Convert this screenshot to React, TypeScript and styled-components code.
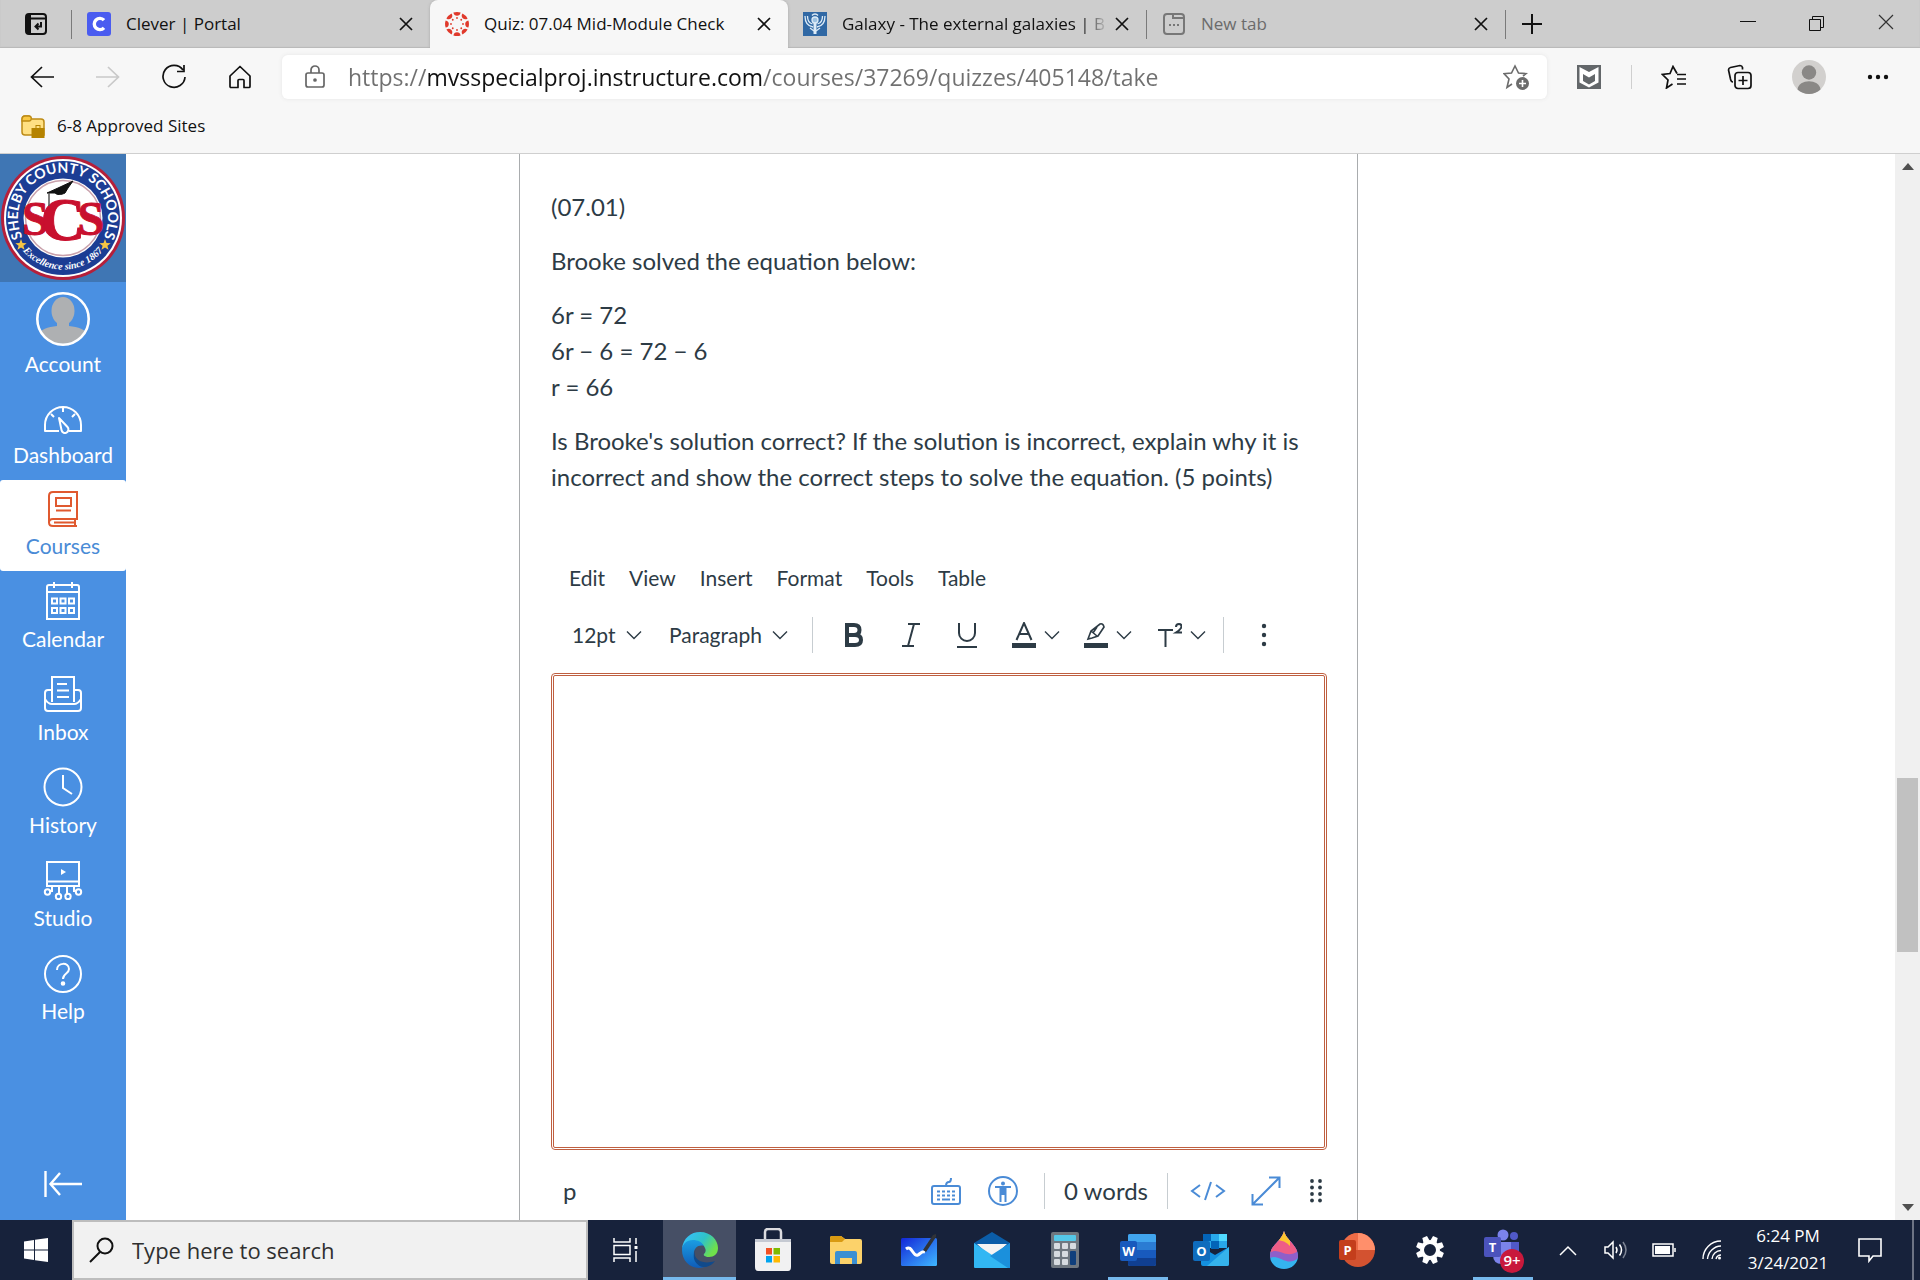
import React from "react";
import styled, { createGlobalStyle, css } from "styled-components";

const UI = `"Open Sans", "Noto Sans", sans-serif`;
const LATO = `Lato, "Open Sans", sans-serif`;
const INK = "#2d3b45";
const LINK = "#4a8bd6";

const Global = createGlobalStyle`
  *, *::before, *::after { box-sizing: border-box; }
  body { margin: 0; background: #fff; font-family: ${UI}; color: #111; }
  button, input, select, textarea { font: inherit; color: inherit; margin: 0; padding: 0; border: 0; background: none; }
  button { cursor: pointer; }
  a { color: inherit; text-decoration: none; }
  svg { display: block; flex: none; }
`;

const Screen = styled.div`
  height: 100vh;
  display: flex;
  flex-direction: column;
  overflow: hidden;
`;

/* ---------- tab strip ---------- */
const TabStrip = styled.header`
  display: flex;
  height: 48px;
  background: #cdcdcd;
  box-shadow: inset 0 -1px 1px #b9b9b9;
`;
const StripButton = styled.button<{ $w: number }>`
  width: ${(p) => p.$w}px;
  display: grid;
  place-items: center;
`;
const Tab = styled.div<{ $active?: boolean; $muted?: boolean }>`
  flex: 0 1 358px;
  min-width: 0;
  display: flex;
  align-items: center;
  padding: 0 14px 0 15px;
  color: ${(p) => (p.$muted ? "#6b6b6b" : "#111")};
  ${(p) => p.$active && css`
    background: #f7f7f7;
    border-radius: 8px 8px 0 0;
    box-shadow: 0 0 3px #a8a8a8;
    clip-path: inset(0 -4px 0 -4px);
  `}
`;
const Divider = styled.span<{ $h: number; $c: string; $ml?: number }>`
  flex: none;
  align-self: center;
  width: 1px;
  height: ${(p) => p.$h}px;
  margin-left: ${(p) => p.$ml ?? 0}px;
  background: ${(p) => p.$c};
`;
const TabTitle = styled.span<{ $fade?: boolean }>`
  flex: 1;
  min-width: 0;
  margin: 0 4px 0 15px;
  font-size: 17px;
  line-height: 24px;
  white-space: nowrap;
  overflow: hidden;
  ${(p) => p.$fade && css`mask-image: linear-gradient(to right, #000 90%, transparent);`}
`;
const TabClose = styled.button`
  flex: none;
  width: 20px;
  height: 20px;
  display: grid;
  place-items: center;
  color: #111;
`;
const WindowButtons = styled.div`
  margin-left: auto;
  display: flex;
`;

/* ---------- address row ---------- */
const Toolbar = styled.nav`
  display: flex;
  align-items: center;
  height: 58px;
  padding: 0 18px 0 9px;
  background: #f7f7f7;
`;
const ToolButton = styled.button<{ $w?: number }>`
  width: ${(p) => p.$w ?? 66}px;
  height: 44px;
  display: grid;
  place-items: center;
`;
const Address = styled.label`
  flex: 1;
  height: 44px;
  margin-left: 9px;
  padding: 0 16px 0 20px;
  display: flex;
  align-items: center;
  gap: 20px;
  background: #fff;
  border-radius: 6px;
  box-shadow: 0 0 4px #e6e6e6;
`;
const UrlInput = styled.input`
  flex: 1;
  min-width: 0;
  height: 36px;
  font-size: 23px;
  outline: 0;
  color: #707070;
  background: linear-gradient(to right, #707070 80px, #111 80px 415px, #707070 415px);
  background-clip: text;
  -webkit-text-fill-color: transparent;
`;
const Bookmarks = styled.div`
  height: 48px;
  padding: 0 0 7px 20px;
  display: flex;
  align-items: center;
  background: #f7f7f7;
  border-bottom: 1px solid #cfcfcf;
`;
const Bookmark = styled.a`
  display: flex;
  align-items: center;
  gap: 12px;
  font-size: 17px;
  line-height: 24px;
`;

/* ---------- page ---------- */
const Page = styled.div`
  flex: 1;
  min-height: 0;
  display: flex;
`;
const Sidebar = styled.nav`
  width: 126px;
  flex: none;
  display: flex;
  flex-direction: column;
  background: #4a90e2;
  color: #fff;
  font-family: ${LATO};
`;
const Brand = styled.a`
  height: 128px;
  display: grid;
  place-items: center;
  background: #3f76b4;
`;
const NavItem = styled.a<{ $active?: boolean; $gap: number }>`
  display: flex;
  flex-direction: column;
  align-items: center;
  gap: ${(p) => p.$gap}px;
  padding: 10px 0 12px;
  font-size: 21px;
  line-height: 26px;
  ${(p) => p.$active && css`
    background: #fff;
    color: ${LINK};
    border-radius: 3px;
  `}
`;
const Collapse = styled.button`
  margin-top: auto;
  height: 72px;
  display: grid;
  place-items: center;
`;
const Main = styled.main`
  flex: 1;
  min-width: 0;
  display: grid;
  grid-template-columns: 393px minmax(0, 1fr) 537px;
  font-family: ${LATO};
  color: ${INK};
`;
const Question = styled.section`
  grid-column: 2;
  padding: 35px 30px 0 31px;
  border: solid #a9acae;
  border-width: 0 1px;
  display: flex;
  flex-direction: column;
  min-height: 0;
`;
const Para = styled.p`
  margin: 0 0 18px;
  font-size: 24px;
  line-height: 36px;
`;
const MenuBar = styled.div`
  margin-top: 48px;
  padding-left: 18px;
  display: flex;
  gap: 24px;
  font-size: 21px;
  line-height: 34px;
`;
const FormatBar = styled.div`
  height: 78px;
  padding: 2px 0 0 21px;
  display: flex;
  align-items: center;
`;
const Picker = styled.label<{ $w: number }>`
  width: ${(p) => p.$w}px;
  display: flex;
  align-items: center;
  gap: 10px;
`;
const Select = styled.select`
  appearance: none;
  outline: 0;
  font-size: 21px;
  line-height: 28px;
`;
const FormatButton = styled.button<{ $w: number; $end?: boolean }>`
  width: ${(p) => p.$w}px;
  height: 36px;
  display: flex;
  align-items: center;
  justify-content: ${(p) => (p.$end ? "flex-end" : "center")};
  gap: 8px;
`;
const Editor = styled.textarea`
  flex: 1;
  min-height: 0;
  width: 100%;
  padding: 12px;
  resize: none;
  outline: 0;
  font-size: 18px;
  border: 3px double #bf5f40;
  border-radius: 4px;
`;
const StatusBar = styled.div`
  height: 70px;
  padding: 12px 4px 0 12px;
  display: flex;
  align-items: center;
  color: ${LINK};
`;
const StatusText = styled.span<{ $grow?: boolean }>`
  flex: ${(p) => (p.$grow ? 1 : "none")};
  padding: ${(p) => (p.$grow ? "0" : "0 19px")};
  font-size: 24px;
  line-height: 32px;
  color: ${INK};
`;

const ScrollTrack = styled.div`
  width: 25px;
  flex: none;
  display: flex;
  flex-direction: column;
  align-items: center;
  background: #f0f0f0;
`;
const ScrollArrow = styled.button`
  width: 25px;
  height: 25px;
  display: grid;
  place-items: center;
`;
const ScrollGap = styled.div<{ $f: number }>`
  flex: ${(p) => p.$f} 1 0;
`;
const ScrollThumb = styled.div`
  width: 21px;
  flex: 174 1 0;
  background: #c1c1c1;
`;

/* ---------- taskbar ---------- */
const Taskbar = styled.footer`
  height: 60px;
  flex: none;
  display: flex;
  background: #17223b;
  color: #fff;
`;
const TaskButton = styled.button<{ $w?: number; $open?: boolean; $focus?: boolean }>`
  width: ${(p) => p.$w ?? 73}px;
  height: 60px;
  display: grid;
  place-items: center;
  background: ${(p) => (p.$focus ? "#464f65" : "none")};
  ${(p) => (p.$open || p.$focus) && css`
    background-image: linear-gradient(#76b9ed, #76b9ed);
    background-repeat: no-repeat;
    background-position: bottom center;
    background-size: ${p.$focus ? "100%" : "60px"} 3px;
  `}
`;
const Search = styled.label`
  width: 516px;
  display: flex;
  align-items: center;
  gap: 17px;
  padding-left: 15px;
  background: #f1f1f1;
  border: 2px solid #bdbdbd;
`;
const SearchInput = styled.input`
  flex: 1;
  min-width: 0;
  font-size: 22px;
  outline: 0;
  &::placeholder { color: #2f2f2f; opacity: 1; }
`;
const Tray = styled.div`
  margin-left: auto;
  display: flex;
`;
const Clock = styled.time`
  width: 104px;
  padding-top: 2px;
  text-align: center;
  font-size: 17px;
  line-height: 27px;
`;
const ShowDesktop = styled.button`
  width: 8px;
  margin-left: 12px;
  border-left: 2px solid #6d7485;
`;

/* ---------- drawings ---------- */
type SvgProps = { w: number; h: number; vb?: string; sw?: number; c?: string; fill?: string; children: React.ReactNode };
const Svg = ({ w, h, vb, sw = 2, c = "currentColor", fill = "none", children }: SvgProps) => (
  <svg width={w} height={h} viewBox={vb ?? `0 0 ${w} ${h}`} fill={fill} stroke={c} strokeWidth={sw} aria-hidden="true">
    {children}
  </svg>
);

const CloseX = () => <Svg w={14} h={14} sw={1.700}><path d="M1 1l12 12M13 1L1 13" /></Svg>;
const Chevron = () => <Svg w={16} h={10} sw={1.4}><path d="M1 1.5l7 7 7-7" /></Svg>;

const CleverLogo = () => (
  <svg width="24" height="24" viewBox="0 0 24 24"><rect width="24" height="24" rx="3" fill="#4a5cf0" />
    <path d="M17 8.2A5.6 5.6 0 1 0 17 15.8" fill="none" stroke="#fff" strokeWidth="3.4" /></svg>
);
const CanvasLogo = () => (
  <svg width="24" height="24" viewBox="0 0 24 24">
    {[0, 45, 90, 135, 180, 225, 270, 315].map((a) => (
      <g key={a} transform={`rotate(${a} 12 12)`} fill="#e0392b">
        <path d="M8.400 .6A12 12 0 0 1 15.600 .6Q15 3.800 12 3.800T8.400 .6Z" />
        <circle cx="12" cy="6" r=".9" />
      </g>
    ))}
  </svg>
);
const BritannicaLogo = () => (
  <svg width="24" height="24" viewBox="0 0 24 24"><rect width="24" height="24" fill="#3068a4" />
    <g fill="none" stroke="#dcebf7" strokeWidth="1.3">
      <path d="M2 4c0 6 2 10 8 11M4.500 4c0 4 1.500 7 5 8M22 4c0 6-2 10-8 11M19.500 4c0 4-1.500 7-5 8M9 3.500c1.500-2 4.500-2 6 0" />
      <circle cx="12" cy="8" r="3" fill="#9dc1e0" /><path d="M12 11v11" strokeWidth="3" /><path d="M7 16l4 3M17 16l-4 3" />
    </g></svg>
);
const FolderIcon = () => (
  <svg width="25" height="24" viewBox="0 0 25 24">
    <path d="M2 5a3 3 0 0 1 3-3h4l3 3h9a3 3 0 0 1 3 3v13H5a3 3 0 0 1-3-3z" fill="#ffe083" stroke="#bd8b16" strokeWidth="1.5" />
    <path d="M2 6c0-3 1-4 3-4h4c3 0 3 5 0 5H2z" fill="#fac944" stroke="#bd8b16" strokeWidth="1.3" />
    <path d="M11.500 14h4v-3h5v3h4v10h-13z" fill="#b58300" /><path d="M16.500 14v-2h3v2z" fill="#ffe083" />
  </svg>
);
const McAfee = () => (
  <svg width="24" height="24" viewBox="0 0 24 24"><rect width="24" height="24" fill="#63676a" />
    <path d="M2.500 2L12 7l9.500-5v15.500L12 22.500 2.500 17.500z" fill="#fff" /><path d="M6 9l6 3.500L18 9v7l-6 3.500L6 16z" fill="#63676a" /></svg>
);
const Profile = () => (
  <svg width="34" height="34" viewBox="0 0 34 34"><circle cx="17" cy="17" r="17" fill="#d2d0ce" />
    <circle cx="17" cy="12.500" r="7.200" fill="#8a8886" /><path d="M5.500 29.500c1-11 22-11 23 0a17 17 0 0 1-23 0z" fill="#8a8886" /></svg>
);

const star5 = (cx: number, cy: number, r: number) =>
  Array.from({ length: 10 }, (_, i) => {
    const a = (Math.PI / 5) * i - Math.PI / 2;
    const q = i % 2 ? r * 0.42 : r;
    return `${cx + q * Math.cos(a)},${cy + q * Math.sin(a)}`;
  }).join(" ");

const SchoolSeal = () => (
  <svg width="126" height="126" viewBox="0 0 126 126" role="img" aria-label="Shelby County Schools">
    <defs>
      <path id="sealTop" d="M26.500 89A45 45 0 1 1 99.500 89" />
      <path id="sealBottom" d="M14 80A52 52 0 0 0 112 80" />
    </defs>
    <circle cx="63" cy="63" r="62" fill="#b51f3a" />
    <circle cx="63" cy="63" r="59" fill="#fff" />
    <circle cx="63" cy="63" r="57" fill="#1c3d94" />
    <circle cx="63" cy="63" r="39.500" fill="#fff" />
    <circle cx="63" cy="63" r="37.500" fill="#fff" stroke="#c9a1ac" strokeWidth="1.5" />
    <g fill="#fff" fontFamily="Lato, sans-serif">
      <text fontSize="14" fontWeight="700"><textPath href="#sealTop" startOffset="50%" textAnchor="middle">SHELBY COUNTY SCHOOLS</textPath></text>
      <text fontSize="10" fontStyle="italic" fontWeight="700" fontFamily="Liberation Serif, serif"><textPath href="#sealBottom" startOffset="50%" textAnchor="middle">Excellence since 1867</textPath></text>
    </g>
    <text x="63" y="80" fontSize="48" textAnchor="middle" fill="#c8102e" stroke="#c8102e" strokeWidth="1" fontFamily="Liberation Serif, serif" fontWeight="700">
      S<tspan fontSize="62" dx="-8" dy="5">C</tspan><tspan dx="-8" dy="-5">S</tspan>
    </text>
    <path d="M47 38l11-5 15-7-5 7-3 5c-4 2-8 2-10 0z" fill="#111" stroke="#111" strokeWidth="1" />
    <path d="M49 38v13" stroke="#555" strokeWidth="1.500" />
    <polygon points={star5(21, 90, 6)} fill="#f6c544" /><polygon points={star5(105, 90, 6)} fill="#f6c544" />
  </svg>
);
const UserAvatar = () => (
  <svg width="54" height="54" viewBox="0 0 54 54">
    <clipPath id="avatarClip"><circle cx="27" cy="27" r="25" /></clipPath>
    <g clipPath="url(#avatarClip)" fill="#aeb0b2"><ellipse cx="27" cy="19" rx="11.500" ry="14" /><path d="M21 28h12v6c9 1 17 3 19 10v10H2V44c2-7 10-9 19-10z" /></g>
    <circle cx="27" cy="27" r="25.700" fill="none" stroke="#fff" strokeWidth="2.600" />
  </svg>
);
const Dashboard = () => <Svg w={40} h={40}><path d="M16 32H2v-6a18 18 0 0 1 36 0v6H26M20 9v4M8 15l3 3M32 15l-3 3M16 19l8.500 9a3.500 3.500 0 1 1-6 3z" strokeLinejoin="round" /></Svg>;
const Courses = () => <Svg w={40} h={40} c="#e0592f"><path d="M6 33V6q0-4 4-4h24v27H10q-4 0-4 3.500T10 36h24M32 29v7M11 32.500h21M13 8h15v8H13zM13 20.500h15" /></Svg>;
const Calendar = () => <Svg w={40} h={40}><path d="M4 38V6q0-2 2-2h28q2 0 2 2v32zM4 11h32M11 1v6M29 1v6M9 17.500h5v5H9zM17.500 17.500h5v5h-5zM26 17.500h5v5h-5zM9 27h5v5H9zM17.500 27h5v5h-5zM26 27h5v5h-5z" /></Svg>;
const Inbox = () => <Svg w={40} h={40}><path d="M9 28V3h22v25M9 16H5q-3 0-3 3v15q0 3 3 3h30q3 0 3-3V19q0-3-3-3h-4M2 25q3 5 7 5h22q4 0 7-5M14 10h10M14 16.500h12M14 23h12" /></Svg>;
const History = () => <Svg w={40} h={40}><circle cx="20" cy="20" r="18.500" /><path d="M20 8v13l9 6" /></Svg>;
const Studio = () => (
  <Svg w={40} h={40}><path d="M4 2h32v24H4zM4 21.500h32M9 26v5H7M16 26v8M24 26v8M31 26v5h2" /><path d="M18 9l5 3-5 3z" fill="currentColor" stroke="none" />
    <circle cx="4.500" cy="32" r="2.700" /><circle cx="15.500" cy="36.500" r="2.700" /><circle cx="25" cy="36.500" r="2.700" /><circle cx="35.500" cy="32" r="2.700" /></Svg>
);
const Help = () => <Svg w={40} h={40}><circle cx="20" cy="21" r="18" /><path d="M14 17c0-8 12-8 12-1 0 5-6 4-6 10" /><circle cx="20" cy="30.500" r="1.300" fill="currentColor" /></Svg>;

const nav = [
  { label: "Dashboard", icon: <Dashboard />, gap: 3 },
  { label: "Courses", icon: <Courses />, gap: 3, active: true },
  { label: "Calendar", icon: <Calendar />, gap: 5 },
  { label: "Inbox", icon: <Inbox />, gap: 5 },
  { label: "History", icon: <History />, gap: 5 },
  { label: "Studio", icon: <Studio />, gap: 5 },
  { label: "Help", icon: <Help />, gap: 5 },
];

const OfficeTile = ({ x = 0, y = 10, c, letter }: { x?: number; y?: number; c: string; letter: string }) => (
  <><rect x={x} y={y} width="17" height="20" rx="2" fill={c} />
    <text x={x + 8.500} y={y + 15} fill="#fff" fontFamily="Open Sans, sans-serif" fontWeight="700" fontSize="13" textAnchor="middle">{letter}</text></>
);
const Edge = () => (
  <svg width="38" height="38" viewBox="0 0 38 38">
    <defs>
      <linearGradient id="eg" x1="0" y1="0" x2="1" y2=".5"><stop offset=".2" stopColor="#35c1f1" /><stop offset=".6" stopColor="#2fc3c8" /><stop offset="1" stopColor="#6fe04b" /></linearGradient>
      <linearGradient id="eb" x1="0" y1="0" x2="0" y2="1"><stop offset="0" stopColor="#1b9de2" /><stop offset="1" stopColor="#0f5cb8" /></linearGradient>
    </defs>
    <path d="M1 18C2 7 10 1 19 1c11 0 18 8 18 16 0 6-4 9-9 9-4 0-6-2-5-3 2-2 2-4 1-6-2-5-7-7-12-7C7 10 3 13 1 18z" fill="url(#eg)" />
    <path d="M1 19c0-6 5-10 11-10 5 0 9 2 11 6-6-2-11 3-10 9 1 7 7 12 13 11-13 6-25-3-25-16z" fill="url(#eb)" />
    <path d="M15 18c-5 8 4 17 19 12-2 3-5 5-9 6-9 1-16-9-10-18z" fill="#114a8b" />
  </svg>
);
const Store = () => (
  <svg width="36" height="44" viewBox="0 0 36 44"><path d="M10 12V4q0-3 3-3h10q3 0 3 3v8" fill="none" stroke="#dcdce0" strokeWidth="2.500" />
    <path d="M0 11h36v28q0 4-3 4H3q-3 0-3-4z" fill="#f1f1f2" /><path d="M0 11h36v3H0z" fill="#c5c9d2" />
    <path d="M11 20h6v6.500h-6z" fill="#f25022" /><path d="M18.500 20H25v6.500h-6.500z" fill="#7fba00" /><path d="M11 28h6v6.500h-6z" fill="#00a4ef" /><path d="M18.500 28H25v6.500h-6.500z" fill="#ffb900" /></svg>
);
const Explorer = () => (
  <svg width="32" height="28" viewBox="0 0 32 28"><path d="M0 2q0-2 2-2h9l4 3h15q2 0 2 2v21q0 2-2 2H2q-2 0-2-2z" fill="#fcd26a" /><path d="M0 2q0-2 2-2h9l4 3-3 3H0z" fill="#d99a12" />
    <path d="M5 28V17q0-2 2-2h18q2 0 2 2v11h-5v-6H10v6z" fill="#3b8fd2" /></svg>
);
const Whiteboard = () => (
  <svg width="36" height="34" viewBox="0 0 36 34"><defs><linearGradient id="wb" x1="0" y1="0" x2="1" y2="1"><stop offset="0" stopColor="#1226d8" /><stop offset="1" stopColor="#3fb8ff" /></linearGradient></defs>
    <rect y="5" width="36" height="28" rx="1.500" fill="url(#wb)" /><path d="M5 16c6-5 7 9 12 6 3-2 4-4 7-3" fill="none" stroke="#fff" strokeWidth="3" /><path d="M22 17L32 2l3-1v3L25 19z" fill="#303338" /></svg>
);
const Mail = () => (
  <svg width="36" height="36" viewBox="0 0 36 36"><path d="M0 11L18 0l18 11v6H0z" fill="#0b5da8" /><path d="M3 12h30L18 26z" fill="#f4f4f4" /><path d="M0 11l36 24q0 1-1 1H1q-1 0-1-1z" fill="#32b7f3" /><path d="M36 11L16 24l18 12h2z" fill="#1b90dc" /></svg>
);
const Calculator = () => (
  <svg width="28" height="36" viewBox="0 0 28 36"><rect width="28" height="36" rx="2" fill="#6f7780" /><rect x="3" y="3" width="22" height="6" rx="1" fill="#54c7e8" />
    <g fill="#d7dbe0">{[11, 19, 27].map((y) => [3, 11].map((x) => <rect key={`${x}-${y}`} x={x} y={y} width="6" height="6" rx="1" />))}<rect x="19" y="11" width="6" height="6" rx="1" /></g><rect x="19" y="19" width="6" height="14" rx="1" fill="#103f7c" /></svg>
);
const Word = () => (
  <svg width="36" height="34" viewBox="0 0 36 34"><rect x="8" y="1" width="28" height="32" rx="2" fill="#2b7cd3" /><path d="M8 3q0-2 2-2h24q2 0 2 2v6H8z" fill="#41a5ee" /><path d="M8 17h28v8H8z" fill="#185abd" /><path d="M8 25h28v6q0 2-2 2H10q-2 0-2-2z" fill="#103f91" /><OfficeTile y={8} c="#185abd" letter="W" /></svg>
);
const Outlook = () => (
  <svg width="36" height="34" viewBox="0 0 36 34"><path d="M10 1h24v14H10z" fill="#28a8ea" /><path d="M10 1h8v7h-8zM18 8h8v8h-8z" fill="#0364b8" /><path d="M26 1h8v7h-8z" fill="#50d9ff" /><path d="M8 14l14 8 14-8v17q0 2-2 2H10q-2 0-2-2z" fill="#1490df" /><path d="M36 14L14 33h20q2 0 2-2z" fill="#35b3ec" /><OfficeTile y={8} c="#0f6cbd" letter="O" /></svg>
);
const Paint3D = () => (
  <svg width="28" height="38" viewBox="0 0 28 38"><clipPath id="drop"><path d="M14 0c2 9 14 14 14 25a14 13 0 0 1-28 0C0 14 12 10 14 0z" /></clipPath>
    <g clipPath="url(#drop)"><path d="M0 0h28v38H0z" fill="#35b4ef" /><path d="M0 27c9-5 17 10 28 0V0H0z" fill="#8f5fc9" /><path d="M0 22c8-7 16 7 28-2V0H0z" fill="#ee5d86" /><path d="M10 0h10v15q-5-6-14-6z" fill="#fdc62f" /></g></svg>
);
const PowerPoint = () => (
  <svg width="36" height="38" viewBox="0 0 36 38"><circle cx="19" cy="19" r="17" fill="#d35230" /><path d="M19 2a17 17 0 0 1 17 17H19z" fill="#ff8f6b" /><path d="M19 2A17 17 0 0 0 2 19h17z" fill="#ed6c47" /><OfficeTile y={9} c="#c43e1c" letter="P" /></svg>
);
const Gear = () => (
  <svg width="28" height="28" viewBox="0 0 28 28"><g fill="#fff">{[0, 45, 90, 135, 180, 225, 270, 315].map((a) => <path key={a} d="M11.500 0h5l.8 5h-6.600z" transform={`rotate(${a + 22.500} 14 14)`} />)}</g><circle cx="14" cy="14" r="8" fill="none" stroke="#fff" strokeWidth="4" /></svg>
);
const Teams = () => (
  <svg width="42" height="46" viewBox="0 0 42 46"><circle cx="21" cy="8" r="5.500" fill="#7b83eb" /><circle cx="32" cy="9" r="4" fill="#5059c9" /><path d="M26 15h11v9q0 8-8 8z" fill="#5059c9" /><path d="M12 15h17v13q0 9-9 9t-9-9z" fill="#7b83eb" /><OfficeTile x={2} y={10} c="#4b53bc" letter="T" />
    <circle cx="30" cy="34" r="12" fill="#c8193c" /><text x="30" y="39" fill="#fff" fontFamily="Open Sans, sans-serif" fontWeight="600" fontSize="15" textAnchor="middle">9+</text></svg>
);

const apps: { name: string; icon: React.ReactNode; open?: boolean; focus?: boolean }[] = [
  { name: "Microsoft Edge", icon: <Edge />, focus: true },
  { name: "Microsoft Store", icon: <Store /> },
  { name: "File Explorer", icon: <Explorer /> },
  { name: "Whiteboard", icon: <Whiteboard /> },
  { name: "Mail", icon: <Mail /> },
  { name: "Calculator", icon: <Calculator /> },
  { name: "Word", icon: <Word />, open: true },
  { name: "Outlook", icon: <Outlook /> },
  { name: "Paint 3D", icon: <Paint3D /> },
  { name: "PowerPoint", icon: <PowerPoint /> },
  { name: "Settings", icon: <Gear /> },
  { name: "Teams", icon: <Teams />, open: true },
];

const STAR = "M9 20l-5 3.500 2-8.500L1 9.600 8.500 9 12 2l3.500 7 7.500 .6-3 2.500";

export default function App() {
  return (
    <>
      <Global />
      <Screen>
        <TabStrip>
          <StripButton $w={71} aria-label="Tab actions">
            <Svg w={22} h={22} c="#111"><rect x="1" y="1" width="20" height="20" rx="3" /><path d="M2 2h3v18H2z" fill="#111" /><path d="M6 5.500h14M16 9v4.500h-5M13.500 10.500l-3 3 3 3" /></Svg>
          </StripButton>
          <Divider $h={29} $c="#7a7a7a" />
          <Tab><CleverLogo /><TabTitle>Clever | Portal</TabTitle><TabClose aria-label="Close tab"><CloseX /></TabClose></Tab>
          <Tab $active><CanvasLogo /><TabTitle>Quiz: 07.04 Mid-Module Check</TabTitle><TabClose aria-label="Close tab"><CloseX /></TabClose></Tab>
          <Tab><BritannicaLogo /><TabTitle $fade>Galaxy - The external galaxies | B</TabTitle><TabClose aria-label="Close tab"><CloseX /></TabClose></Tab>
          <Divider $h={29} $c="#7a7a7a" />
          <Tab $muted>
            <Svg w={24} h={22} c="#777"><rect x="2" y="1" width="20" height="20" rx="3" /><path d="M11 1v4h11M7 12h2M11 12h2M15 12h2" /></Svg>
            <TabTitle>New tab</TabTitle><TabClose aria-label="Close tab"><CloseX /></TabClose>
          </Tab>
          <Divider $h={29} $c="#7a7a7a" />
          <StripButton $w={52} aria-label="New tab"><Svg w={20} h={20} c="#111"><path d="M10 0v20M0 10h20" /></Svg></StripButton>
          <WindowButtons>
            <StripButton $w={69} aria-label="Minimize"><Svg w={16} h={20} sw={1} c="#111"><path d="M0 7.500h16" /></Svg></StripButton>
            <StripButton $w={69} aria-label="Restore"><Svg w={16} h={20} sw={1} c="#111"><path d="M.5 5.500h11v11H.500zM3.500 5.500v-3h11v11h-3" /></Svg></StripButton>
            <StripButton $w={69} aria-label="Close window"><Svg w={16} h={20} sw={1.200} c="#333"><path d="M1 1l14 14M15 1L1 15" /></Svg></StripButton>
          </WindowButtons>
        </TabStrip>

        <Toolbar aria-label="Browser">
          <ToolButton aria-label="Back"><Svg w={24} h={22} c="#111" sw={1.700}><path d="M24 11H1.500M12 1L1.500 11 12 21" /></Svg></ToolButton>
          <ToolButton aria-label="Forward"><Svg w={24} h={22} c="#c9c9c9" sw={1.700}><path d="M0 11h22.500M12 1l10.500 10L12 21" /></Svg></ToolButton>
          <ToolButton aria-label="Refresh"><Svg w={26} h={26} c="#111" sw={1.700}><path d="M22 6A11 11 0 1 0 24 13M23 1v6.500h-7" /></Svg></ToolButton>
          <ToolButton aria-label="Home"><Svg w={22} h={24} c="#111" sw={1.700}><path d="M1 11L11 1.500 21 11v10.500q0 1-1 1h-5v-7q0-1-1-1h-4q-1 0-1 1v7H2q-1 0-1-1z" strokeLinejoin="round" /></Svg></ToolButton>
          <Address>
            <Svg w={26} h={24} c="#666" sw={1.700}><rect x="4" y="8" width="18" height="14" rx="2" /><path d="M9 8V5a4 4 0 0 1 8 0v3" /><circle cx="13" cy="15" r="1" fill="#666" /></Svg>
            <UrlInput aria-label="Address" defaultValue="https://mvsspecialproj.instructure.com/courses/37269/quizzes/405148/take" />
            <Svg w={28} h={26} c="#6b6b6b" sw={1.600}><path d={STAR} /><circle cx="19.500" cy="19.500" r="6.500" fill="#6b6b6b" stroke="none" /><path d="M19.500 16v7M16 19.500h7" stroke="#fff" /></Svg>
          </Address>
          <ToolButton $w={84} aria-label="McAfee WebAdvisor"><McAfee /></ToolButton>
          <Divider $h={24} $c="#cfcfcf" />
          <ToolButton $w={84} aria-label="Favorites"><Svg w={26} h={24} c="#111" sw={1.700}><path d="M16 8.500L12 1.500 9 8.500 1.500 9.500 7 15l-1.500 8 6-4M16 9.500h9M16 14h9M16 19h9" /></Svg></ToolButton>
          <ToolButton $w={48} aria-label="Collections"><Svg w={26} h={26} c="#111" sw={1.700}><path d="M6 18c-2 0-2-1-2.500-3L1.500 6q0-2 2-2.500L13 1.500q2 0 2.500 2v2" /><rect x="8" y="8.500" width="16" height="16" rx="3" /><path d="M16 12v9M11.500 16.500h9" /></Svg></ToolButton>
          <ToolButton $w={90} aria-label="Profile"><Profile /></ToolButton>
          <ToolButton $w={48} aria-label="Menu"><Svg w={22} h={6} c="none" fill="#111"><circle cx="3" cy="3" r="2.200" /><circle cx="11" cy="3" r="2.200" /><circle cx="19" cy="3" r="2.200" /></Svg></ToolButton>
        </Toolbar>
        <Bookmarks><Bookmark href="#"><FolderIcon />6-8 Approved Sites</Bookmark></Bookmarks>

        <Page>
          <Sidebar aria-label="Global navigation">
            <Brand href="#"><SchoolSeal /></Brand>
            <NavItem href="#" $gap={5}><UserAvatar />Account</NavItem>
            {nav.map((n) => (
              <NavItem key={n.label} href="#" $gap={n.gap} $active={n.active}>{n.icon}{n.label}</NavItem>
            ))}
            <Collapse aria-label="Minimize navigation"><Svg w={38} h={28} sw={2.400}><path d="M1.500 1v26M38 14H7M16 3L6.500 14 16 25" /></Svg></Collapse>
          </Sidebar>

          <Main>
            <Question>
              <Para>(07.01)</Para>
              <Para>Brooke solved the equation below:</Para>
              <Para>6r = 72<br />6r − 6 = 72 − 6<br />r = 66</Para>
              <Para>Is Brooke's solution correct? If the solution is incorrect, explain why it is incorrect and show the correct steps to solve the equation. (5 points)</Para>
              <MenuBar>
                {["Edit", "View", "Insert", "Format", "Tools", "Table"].map((m) => <button key={m}>{m}</button>)}
              </MenuBar>
              <FormatBar>
                <Picker $w={97}><Select aria-label="Font size"><option>12pt</option></Select><Chevron /></Picker>
                <Picker $w={143}><Select aria-label="Block style"><option>Paragraph</option></Select><Chevron /></Picker>
                <Divider $h={36} $c="#c7cdd1" />
                <FormatButton $w={80} aria-label="Bold"><Svg w={20} h={26} sw={4}><path d="M4 3h7q5.500 0 5.500 5T11 13H4zM4 13h8q6 0 6 5t-6 5H4z" /></Svg></FormatButton>
                <FormatButton $w={36} aria-label="Italic"><Svg w={18} h={26}><path d="M6 2h12M0 24h12M12 2L6 24" /></Svg></FormatButton>
                <FormatButton $w={76} aria-label="Underline"><Svg w={22} h={26}><path d="M3 1v10a8 8 0 0 0 16 0V1M1 25h20" /></Svg></FormatButton>
                <FormatButton $w={62} aria-label="Text color"><Svg w={24} h={26}><path d="M4.500 18L12 1l7.500 17M7.500 12h9" /><path d="M0 23.500h24" strokeWidth="5" /></Svg><Chevron /></FormatButton>
                <FormatButton $w={82} aria-label="Highlight color"><Svg w={24} h={26} sw={1.600}><path d="M4 17l3-8 9-7q3-1 4 3l-6 9-6 2zM7 9l6 5M13 5l-4 6" /><path d="M0 23.500h24" strokeWidth="5" /></Svg><Chevron /></FormatButton>
                <FormatButton $w={66} aria-label="Superscript"><Svg w={24} h={26}><path d="M0 8h15M7.500 8v17" /><path d="M18 5q0-3 3-3 2.500 0 2.500 2.500T18 10.500h6" /></Svg><Chevron /></FormatButton>
                <Divider $h={36} $c="#c7cdd1" $ml={8} />
                <FormatButton $w={80} aria-label="More"><Svg w={6} h={24} c="none" fill={INK}><circle cx="3" cy="3" r="2.200" /><circle cx="3" cy="12" r="2.200" /><circle cx="3" cy="21" r="2.200" /></Svg></FormatButton>
              </FormatBar>
              <Editor aria-label="Answer" />
              <StatusBar>
                <StatusText $grow>p</StatusText>
                <FormatButton $w={32} aria-label="Keyboard shortcuts"><Svg w={30} h={30}><rect x="1" y="10" width="28" height="18" rx="2" /><path d="M15 10q0-4 3-4 2 0 2-4M6 15.500h3M11 15.500h3M16 15.500h3M21 15.500h3M6 19.500h3M11 19.500h3M16 19.500h3M21 19.500h3M6 23.500h3M11 23.500h8M21 23.500h3" /></Svg></FormatButton>
                <FormatButton $w={82} aria-label="Accessibility checker"><Svg w={30} h={30}><circle cx="15" cy="15" r="14" /><circle cx="15" cy="7.500" r="2" fill="currentColor" stroke="none" /><path d="M7 11h16" /><path d="M12.500 12v14M17.500 12v14" /><path d="M15 11v8" strokeWidth="5" /></Svg></FormatButton>
                <Divider $h={36} $c="#c7cdd1" />
                <StatusText>0 words</StatusText>
                <Divider $h={36} $c="#c7cdd1" />
                <FormatButton $w={80} aria-label="HTML editor"><Svg w={36} h={20}><path d="M10 4L2 10l8 6M26 4l8 6-8 6M21 1l-6 18" /></Svg></FormatButton>
                <FormatButton $w={36} aria-label="Fullscreen"><Svg w={30} h={30}><path d="M1.500 28.500l27-27M18 1.500h10.500V12M1.500 18v10.500H12" /></Svg></FormatButton>
                <FormatButton $w={39} $end aria-label="Resize"><Svg w={14} h={26} c="none" fill={INK}>{[3, 9.500, 16, 22.500].map((y) => [3, 11].map((x) => <circle key={`${x}${y}`} cx={x} cy={y} r="1.900" />))}</Svg></FormatButton>
              </StatusBar>
            </Question>
          </Main>

          <ScrollTrack>
            <ScrollArrow aria-label="Scroll up"><Svg w={12} h={8} c="none" fill="#505050"><path d="M6 0l6 7H0z" /></Svg></ScrollArrow>
            <ScrollGap $f={599} /><ScrollThumb /><ScrollGap $f={243} />
            <ScrollArrow aria-label="Scroll down"><Svg w={12} h={8} c="none" fill="#505050"><path d="M0 0h12L6 7z" /></Svg></ScrollArrow>
          </ScrollTrack>
        </Page>

        <Taskbar>
          <TaskButton $w={72} aria-label="Start"><Svg w={24} h={24} c="none" fill="#fff"><path d="M0 3.500L10 2v9.500H0zM11 1.800L24 0v11.500H11zM0 12.500h10V22L0 20.500zM11 12.500h13V24l-13-1.800z" /></Svg></TaskButton>
          <Search>
            <Svg w={26} h={26} c="#111"><circle cx="16" cy="9" r="7.500" /><path d="M11 15L1 25" /></Svg>
            <SearchInput aria-label="Search" placeholder="Type here to search" />
          </Search>
          <TaskButton $w={75} aria-label="Task view"><Svg w={26} h={24} sw={1.500}><path d="M1 0v4h16V0M1 24v-4h16v4M1 7.500h16v9H1zM23 0v6M23 13v11" /><path d="M21.500 8h3v3h-3z" fill="#fff" stroke="none" /></Svg></TaskButton>
          {apps.map((a) => <TaskButton key={a.name} aria-label={a.name} $open={a.open} $focus={a.focus}>{a.icon}</TaskButton>)}
          <Tray>
            <TaskButton $w={48} aria-label="Show hidden icons"><Svg w={18} h={11} sw={1.500}><path d="M1 10l8-8 8 8" /></Svg></TaskButton>
            <TaskButton $w={48} aria-label="Volume"><Svg w={24} h={20} sw={1.500}><path d="M1 7h3l5-5v16l-5-5H1zM12 7q2 3 0 6M15.500 4.500q4 5.500 0 11" /><path d="M19 2q6 8 0 16" stroke="#7d8494" /></Svg></TaskButton>
            <TaskButton $w={48} aria-label="Battery"><Svg w={24} h={14} sw={1.500}><path d="M1 1h20v12H1zM23 5v4" /><path d="M3 3h15v8H3z" fill="#fff" stroke="none" /></Svg></TaskButton>
            <TaskButton $w={48} aria-label="Network"><Svg w={20} h={20} sw={1.400}><path d="M1 19A18 18 0 0 1 19 1M5.500 19A14 14 0 0 1 19 6M10 19a9 9 0 0 1 9-8.500M14 19q1-4 5-4" /><circle cx="17.500" cy="18" r="1.500" fill="#fff" stroke="none" /></Svg></TaskButton>
            <Clock>6:24 PM<br />3/24/2021</Clock>
            <TaskButton $w={60} aria-label="Notifications"><Svg w={24} h={26} sw={1.600}><path d="M1 2h22v17h-8l-4 5v-5H1z" /></Svg></TaskButton>
            <ShowDesktop aria-label="Show desktop" />
          </Tray>
        </Taskbar>
      </Screen>
    </>
  );
}
